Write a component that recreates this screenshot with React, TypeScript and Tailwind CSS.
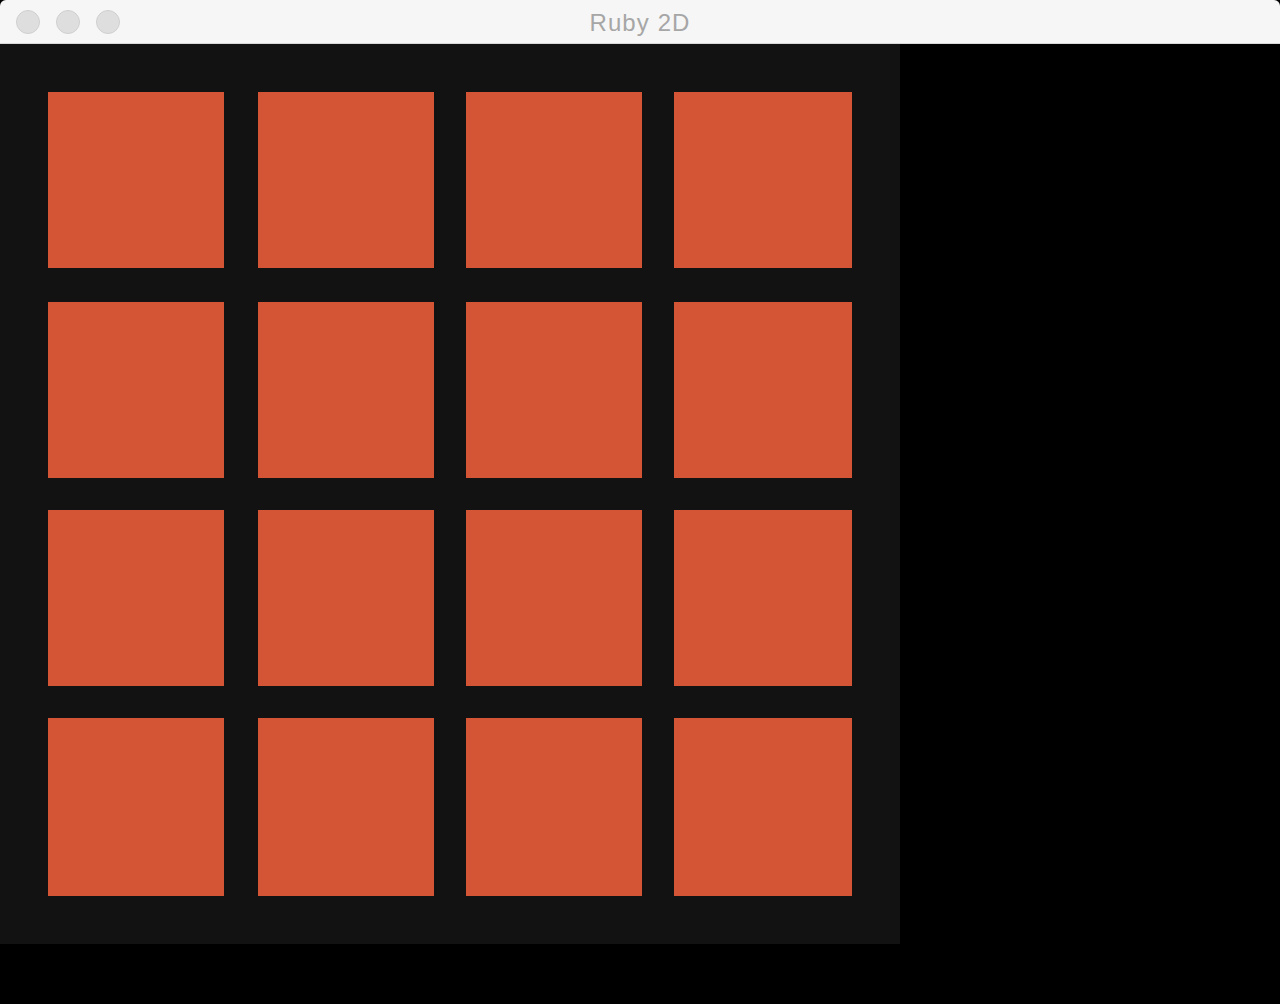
const cells = Array.from({ length: 16 }, (_, i) => i)

export default function App() {
  return (
    <div className="w-[1280px] h-[1004px] bg-black overflow-hidden flex flex-col">
      {/* title bar */}
      <div className="relative h-[44px] shrink-0 bg-[#f6f6f6] rounded-t-[6px] border-b border-[#d8d8d8] flex items-center justify-center pt-[3px]">
        <div className="absolute left-[16px] top-[10px] flex gap-[16px]">
          <span className="w-[24px] h-[24px] rounded-full bg-[#dedede] border border-[#d0d0d0]" />
          <span className="w-[24px] h-[24px] rounded-full bg-[#dedede] border border-[#d0d0d0]" />
          <span className="w-[24px] h-[24px] rounded-full bg-[#dedede] border border-[#d0d0d0]" />
        </div>
        <span className="text-[24px] tracking-[1.1px] text-[#a6a6a6] font-['Liberation_Sans',sans-serif]">
          Ruby 2D
        </span>
      </div>

      {/* board */}
      <div className="w-[900px] h-[900px] bg-[#121212] pt-[48px] pl-[48px]">
        <div className="grid grid-cols-[178px_176px_176px_178px] grid-rows-[178px_176px_176px_178px] gap-8">
          {cells.map((i) => (
            <div
              key={i}
              className={
                (i % 4 === 3 ? "w-[178px] " : "w-[176px] ") +
                (i >= 12 ? "h-[178px] " : "h-[176px] ") +
                "bg-[#d35535]"
              }
            />
          ))}
        </div>
      </div>
    </div>
  )
}
